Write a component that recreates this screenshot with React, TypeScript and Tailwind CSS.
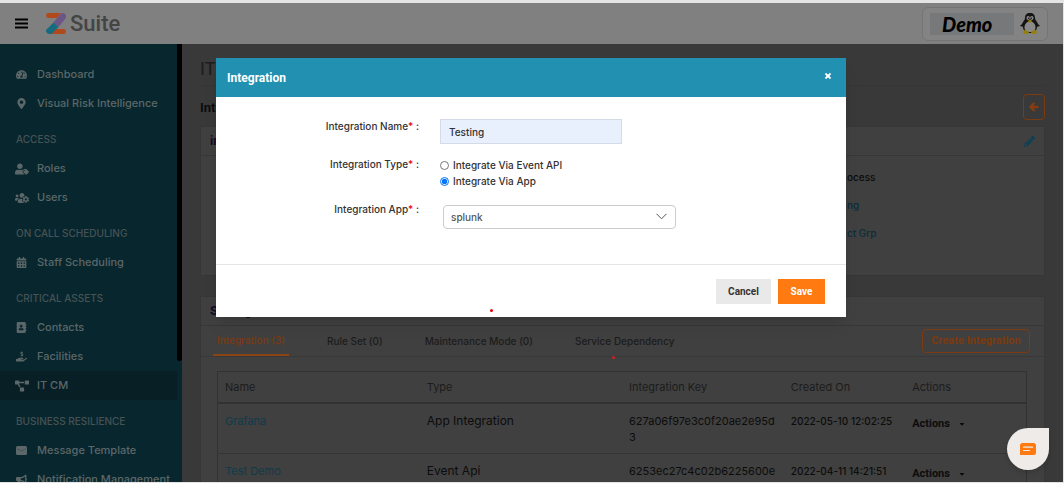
import React, { useState } from 'react';
import {
  FaAddressBook,
  FaArrowLeft,
  FaBullhorn,
  FaCalendarAlt,
  FaCaretDown,
  FaHandHoldingUsd,
  FaMapMarkerAlt,
  FaPencilAlt,
  FaProjectDiagram,
  FaTachometerAlt,
  FaTimes,
  FaUserTag,
  FaUsersCog,
} from 'react-icons/fa';

function MessageIcon({ className }: { className?: string }) {
  return (
    <svg viewBox="0 0 11 10" className={className} fill="currentColor" aria-hidden="true">
      <rect y=".5" width="11" height="9" rx="1.500" />
      <path d="M1 3l4.500 2.500L10 3" fill="none" stroke="#2c4046" strokeWidth=".5" />
    </svg>
  );
}

const menu = [
  {
    title: '',
    items: [
      { label: 'Dashboard', icon: FaTachometerAlt },
      { label: 'Visual Risk Intelligence', icon: FaMapMarkerAlt },
    ],
  },
  {
    title: 'ACCESS',
    items: [
      { label: 'Roles', icon: FaUserTag },
      { label: 'Users', icon: FaUsersCog },
    ],
  },
  { title: 'ON CALL SCHEDULING', items: [{ label: 'Staff Scheduling', icon: FaCalendarAlt }] },
  {
    title: 'CRITICAL ASSETS',
    items: [
      { label: 'Contacts', icon: FaAddressBook },
      { label: 'Facilities', icon: FaHandHoldingUsd },
      { label: 'IT CM', icon: FaProjectDiagram },
    ],
  },
  {
    title: 'BUSINESS RESILIENCE',
    items: [
      { label: 'Message Template', icon: MessageIcon },
      { label: 'Notification Management', icon: FaBullhorn },
    ],
  },
];

// these glyphs are wider than they are tall
const wideIcons = ['Roles', 'Users', 'IT CM'];

const rows = [
  { name: 'Grafana', type: 'App Integration', key: '627a06f97e3c0f20ae2e95d3', created: '2022-05-10 12:02:25' },
  { name: 'Test Demo', type: 'Event Api', key: '6253ec27c4c02b6225600e1d', created: '2022-04-11 14:21:51' },
];

const tabs = ['Integration (3)', 'Rule Set (0)', 'Maintenance Mode (0)', 'Service Dependency'];

function Logo() {
  return (
    <svg viewBox="0 0 20 21" className="w-5 h-[21px]" aria-hidden="true">
      <path d="M2 0h13l-4 5H2.500Q0 5 0 2.500T2 0z" fill="#b04a1c" />
      <path d="M9 16h8.500Q20 16 20 18.500T18 21H5z" fill="#b04a1c" />
      <path d="M14.500 1Q17-1 19 1t.5 4.500L12.500 14 7.500 9.500z" fill="#6b5686" />
      <path d="M7.500 9.500l5 4.500L6 20.500Q3 22 1 20T.5 16.500z" fill="#176b7e" />
    </svg>
  );
}

function Penguin() {
  return (
    <svg viewBox="0 0 20 21" className="w-5 h-[21px]" aria-hidden="true">
      <path d="M10 0C6.500 0 5 2 5 5c0 2-2 3.500-3 6l-2 2 3 .8C3 17 5 20 10 20s7-3 7-6.200l3-.8-2-2c-1-2.500-3-4-3-6 0-3-1.500-5-5-5z" fill="#141414" />
      <path d="M10 8.500c-3.500 0-5.500 3-5.500 6S7 19 10 19s5.500-1.500 5.500-4.500-2-6-5.500-6z" fill="#8a8a8a" />
      <ellipse cx="8.200" cy="5" rx="1.700" ry="2" fill="#8a8a8a" />
      <ellipse cx="11.800" cy="5" rx="1.700" ry="2" fill="#8a8a8a" />
      <circle cx="8.600" cy="5.200" r=".7" fill="#111" />
      <circle cx="11.400" cy="5.200" r=".7" fill="#111" />
      <path d="M7.500 8L10 6.700 12.500 8 10 10z" fill="#94800c" />
      <path d="M3 19l2-2.500 4 2.500-1 2H4zM17 19l-2-2.500-4 2.500 1 2h4z" fill="#94800c" />
    </svg>
  );
}

function Sidebar() {
  return (
    <nav className="w-[182px] shrink-0 flex bg-[#08262d] text-[#5c6769] overflow-hidden">
      <div className="flex-1 min-w-0 pt-4">
        {menu.map((group) => (
          <div key={group.title}>
            {group.title && <h2 className="h-9 pt-[13px] pl-4 leading-4 text-[#465356] text-[10px] font-medium whitespace-nowrap">{group.title}</h2>}
            {group.items.map((item) => (
              <a
                key={item.label}
                href="#"
                className={`h-[29px] flex items-center gap-2 pl-[14px] whitespace-nowrap font-medium ${item.label === 'IT CM' ? 'bg-[#081f26]' : ''}`}
              >
                <span className="w-[15px] flex justify-center">
                  <item.icon className={wideIcons.includes(item.label) ? 'size-[14px]' : 'size-[11px]'} />
                </span>
                {item.label}
              </a>
            ))}
          </div>
        ))}
      </div>
      <div className="w-[5px] h-[317px] bg-black rounded-b" />
    </nav>
  );
}

function IntegrationModal({ onClose }: { onClose: () => void }) {
  const [via, setVia] = useState('app');
  const star = <span className="text-red-600">*</span>;

  return (
    <div role="dialog" aria-label="Integration" className="relative w-[630px] bg-white text-[#333] text-[10px] font-medium shadow-lg">
      <div className="h-[39px] flex items-center justify-between pl-[11px] pr-[14px] bg-[#2290b0] text-white">
        <h2 className="pt-px font-[Roboto] font-bold text-xs">Integration</h2>
        <button onClick={onClose} aria-label="Close" className="mb-1">
          <FaTimes className="size-2" stroke="currentColor" strokeWidth="40" />
        </button>
      </div>

      <div className="h-[167px] pt-[22px]">
        <div className="grid grid-cols-[203px_1fr] gap-x-[21px]">
          <label htmlFor="name" className="text-right leading-[14px]">Integration Name{star} :</label>
          <input id="name" defaultValue="Testing" className="w-[182px] h-[25px] px-2 bg-[#e8f0fe] border border-[#d5dbe6]" />

          <span id="type" className="mt-[13px] text-right leading-[14px]">Integration Type{star} :</span>
          <div role="radiogroup" aria-labelledby="type" className="mt-[13px]">
            <label className="h-4 flex items-center gap-1">
              <input type="radio" name="via" className="size-[9px]" checked={via === 'event'} onChange={() => setVia('event')} />
              Integrate Via Event API
            </label>
            <label className="h-4 flex items-center gap-1">
              <input type="radio" name="via" className="size-[9px]" checked={via === 'app'} onChange={() => setVia('app')} />
              Integrate Via App
            </label>
          </div>

          <label htmlFor="app" className="mt-[13px] text-right leading-[14px]">Integration App{star} :</label>
          <div className="relative w-[233px] mt-4 ml-[3px]">
            <select id="app" className="appearance-none w-full h-6 px-[7px] border border-[#ccc] rounded-sm bg-white text-[#555]">
              <option>splunk</option>
            </select>
            <svg viewBox="0 0 11 7" className="absolute right-[9px] top-2 w-[11px] h-[7px]" fill="none" stroke="#555" aria-hidden="true">
              <path d="M.5.800l5 5 5-5" />
            </svg>
          </div>
        </div>
      </div>

      <div className="h-[53px] flex items-center justify-end gap-[7px] pr-[21px] border-t border-[#e5e5e5] font-[Roboto] font-bold text-[10px]">
        <button onClick={onClose} className="w-[55px] h-[25px] bg-[#e9e9e9]">Cancel</button>
        <button className="w-[47px] h-[25px] bg-[#ff7a10] text-white">Save</button>
      </div>
      <span className="absolute left-[274px] bottom-[5px] size-[3px] rounded-full bg-red-600" />
    </div>
  );
}

export default function App() {
  const [open, setOpen] = useState(true);

  return (
    <div className="relative h-screen flex flex-col overflow-hidden pt-[3px] pr-px pb-px bg-[#e4e4e4] font-[Inter,sans-serif] text-[11px]">
      <header className="h-[41px] shrink-0 flex items-center pl-[15px] pr-[15px] bg-[#808080]">
        <button aria-label="Menu">
          <svg viewBox="0 0 13 11" className="w-[13px] h-[11px]" aria-hidden="true">
            <path d="M0 1.500h13M0 5.500h13M0 9.500h13" stroke="#000" strokeWidth="2" />
          </svg>
        </button>
        <div className="flex items-center gap-1 ml-[18px] text-[#444]">
          <Logo />
          <span className="font-[Roboto] font-medium text-[22px]">Suite</span>
        </div>
        <button className="ml-auto w-[126px] h-[34px] flex items-center justify-between px-[7px] border border-[#757575] rounded-md bg-[#838383]">
          <span className="w-[84px] h-[22px] pl-3 flex items-center bg-[#76787a] text-black text-[20px] italic font-black font-[Lato]">Demo</span>
          <Penguin />
        </button>
      </header>

      <div className="flex-1 min-h-0 flex">
        <Sidebar />
        <main className="flex-1 min-w-0 px-[18px] bg-[#393939] text-[#0c0c0c] overflow-hidden">
          <h1 className="h-[42px] flex items-center pt-2 border-b border-[#353535] font-[Roboto] text-lg text-[#1c1c1c]">IT</h1>
          <div className="h-10 flex items-center justify-between">
            <h2 className="pt-1 font-[Roboto] font-bold text-[13px]">Integrations</h2>
            <button aria-label="Back" className="w-[22px] h-[26px] mt-[2px] flex items-center justify-center border border-[#7c3a10] rounded-sm text-[#8a3f10]">
              <FaArrowLeft className="size-[10px]" stroke="currentColor" strokeWidth="50" />
            </button>
          </div>

          <section className="bg-[#404040] border border-[#363636]">
            <div className="h-[29px] flex items-center justify-between px-[9px] border-b border-[#373737]">
              <h3 className="font-[Roboto] font-bold text-xs text-[#120a26]">integration</h3>
              <button aria-label="Edit">
                <FaPencilAlt className="size-[11px] text-[#0d4052]" />
              </button>
            </div>
            <div className="h-[119px] pt-[7px] grid grid-cols-[646fr_197fr] content-start leading-7 text-[10px] font-medium">
              <span className="col-start-2">ocess</span>
              <a href="#" className="col-start-2 text-[#0b2d3a]">ng</a>
              <a href="#" className="col-start-2 text-[#0b2d3a]">ct Grp</a>
            </div>
          </section>

          <section className="mt-5 bg-[#404040] border border-[#363636]">
            <h3 className="h-[29px] flex items-center px-[9px] border-b border-[#373737] font-[Roboto] font-bold text-[13px] text-[#120a26]">Setting</h3>
            <div className="relative h-[31px] flex items-stretch pl-3 pr-[14px] border-b border-[#383838] text-[#1c1c1c] text-[10px] font-medium">
              {tabs.map((tab, i) => (
                <button
                  key={tab}
                  className={i === 0 ? 'px-1 mr-[38px] border-b-2 border-[#8a4312] text-[#7c3a10]' : 'mr-[42px]'}
                >
                  {tab}
                </button>
              ))}
              <button className="ml-auto self-center w-[108px] h-6 border border-[#7c3a10] rounded-sm text-[#7c3a10] text-[11px] font-[Roboto] font-bold">
                Create Integration
              </button>
              <span className="absolute left-[411px] bottom-[-3px] size-[3px] rounded-full bg-[#d02020]" />
            </div>
            <div className="pt-[14px] pl-4 pr-[17px]">
              <table className="w-full table-fixed border border-[#323232]">
                <thead>
                  <tr className="h-[31px] border-b-2 border-[#323232] text-left text-[#1c1c1c]">
                    <th className="w-1/4 px-[7px] font-normal">Name</th>
                    <th className="w-1/4 px-[7px] font-normal">Type</th>
                    <th className="w-1/5 px-[7px] font-normal">Integration Key</th>
                    <th className="px-[7px] font-normal">Created On</th>
                    <th className="px-[7px] font-normal">Actions</th>
                  </tr>
                </thead>
                <tbody>
                  {rows.map((row) => (
                    <tr key={row.key} className="h-[51px] border-b border-[#343434] align-top leading-4">
                      <td className="px-[7px] pt-[9px]">
                        <a href="#" className="text-[#103b4a]">{row.name}</a>
                      </td>
                      <td className="px-[7px] pt-[9px] text-xs leading-4">{row.type}</td>
                      <td className="px-[7px] pt-[9px] break-all">{row.key}</td>
                      <td className="px-[7px] pt-[9px] text-[10px] leading-4 font-medium whitespace-nowrap">{row.created}</td>
                      <td className="px-[7px] pt-3">
                        <button className="flex items-center gap-2 font-[Roboto] font-bold">
                          Actions <FaCaretDown className="size-2" />
                        </button>
                      </td>
                    </tr>
                  ))}
                </tbody>
              </table>
            </div>
          </section>
        </main>
      </div>

      {open && (
        <div className="absolute inset-0 flex justify-center items-start pt-[58px] pr-[2px]">
          <IntegrationModal onClose={() => setOpen(false)} />
        </div>
      )}

      <button aria-label="Chat" className="absolute right-[15px] bottom-[13px] size-[42px] flex items-center justify-center rounded-full rounded-tr-sm bg-[#efebe8] shadow-md">
        <svg viewBox="0 0 16 12" className="w-4 h-3" aria-hidden="true">
          <path d="M2.500 0h11A2.500 2.500 0 0 1 16 2.500v7a2.500 2.500 0 0 1-2.500 2.500H0V2.500A2.500 2.500 0 0 1 2.500 0z" fill="#ff7a10" />
          <path d="M3 4.200h10M3 7.500h7" stroke="#efebe8" strokeWidth="1.200" />
        </svg>
      </button>
    </div>
  );
}
